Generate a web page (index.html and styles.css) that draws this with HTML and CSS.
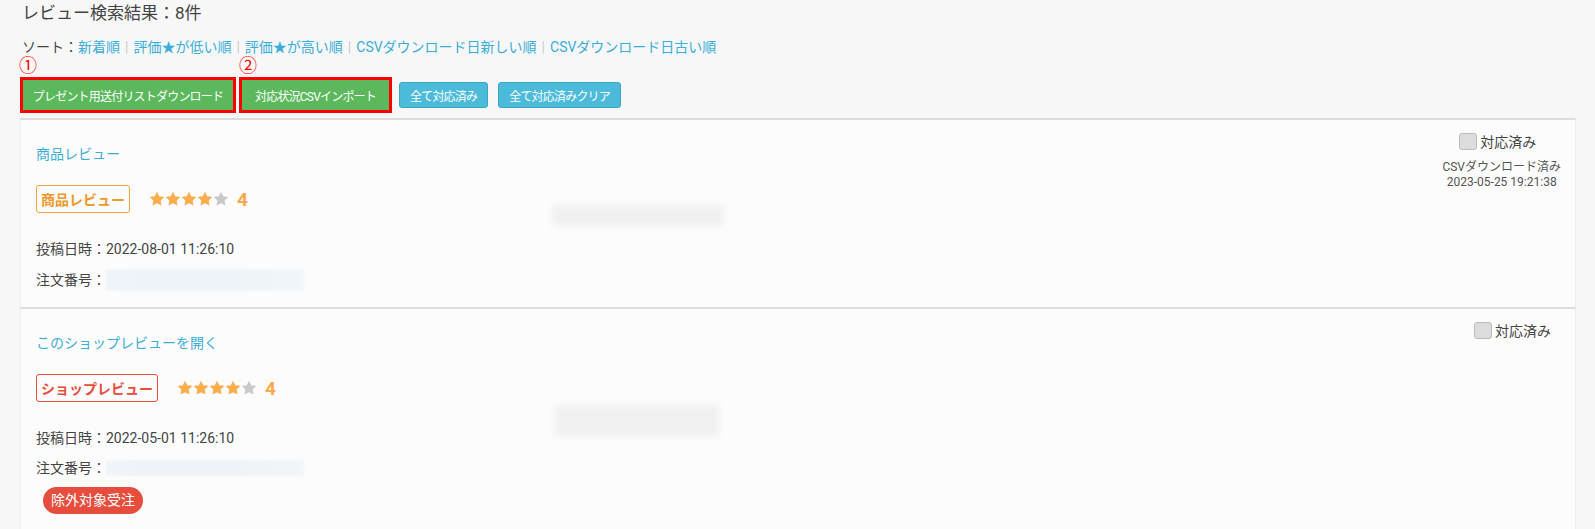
FILE: index.html
```html
<!DOCTYPE html>
<html lang="ja">
<head>
    <meta charset="utf-8">
    <title>レビュー検索結果</title>
    <link rel="stylesheet" href="styles.css">
</head>
<body>
    <h1 class="result-title">レビュー検索結果：8件</h1>

    <div class="sort">
        ソート：<a href="#">新着順</a><span class="sep">|</span><a href="#">評価★が低い順</a><span class="sep">|</span><a href="#">評価★が高い順</a><span class="sep">|</span><a href="#">CSVダウンロード日新しい順</a><span class="sep">|</span><a href="#">CSVダウンロード日古い順</a>
    </div>

    <div class="actions">
        <span class="marked">
            <span class="mark">①</span>
            <button type="button" class="btn btn-green btn-present">プレゼント用送付リストダウンロード</button>
        </span>
        <span class="marked">
            <span class="mark">②</span>
            <button type="button" class="btn btn-green btn-import">対応状況CSVインポート</button>
        </span>
        <button type="button" class="btn btn-blue">全て対応済み</button>
        <button type="button" class="btn btn-blue">全て対応済みクリア</button>
    </div>

    <!-- review 1 -->
    <div class="review-card">
        <div class="review-main">
            <a href="#" class="review-link">商品レビュー</a>
            <div class="review-head">
                <span class="tag tag-item">商品レビュー</span>
                <span class="stars">
                    <svg viewBox="1 1 22 22"><polygon class="on" points="12,2 15.09,8.26 22,9.27 17,14.14 18.18,21.02 12,17.77 5.82,21.02 7,14.14 2,9.27 8.91,8.26"/></svg>
                    <svg viewBox="1 1 22 22"><polygon class="on" points="12,2 15.09,8.26 22,9.27 17,14.14 18.18,21.02 12,17.77 5.82,21.02 7,14.14 2,9.27 8.91,8.26"/></svg>
                    <svg viewBox="1 1 22 22"><polygon class="on" points="12,2 15.09,8.26 22,9.27 17,14.14 18.18,21.02 12,17.77 5.82,21.02 7,14.14 2,9.27 8.91,8.26"/></svg>
                    <svg viewBox="1 1 22 22"><polygon class="on" points="12,2 15.09,8.26 22,9.27 17,14.14 18.18,21.02 12,17.77 5.82,21.02 7,14.14 2,9.27 8.91,8.26"/></svg>
                    <svg viewBox="1 1 22 22"><polygon class="off" points="12,2 15.09,8.26 22,9.27 17,14.14 18.18,21.02 12,17.77 5.82,21.02 7,14.14 2,9.27 8.91,8.26"/></svg>
                </span>
                <span class="score">4</span>
            </div>
            <p class="meta">投稿日時：2022-08-01 11:26:10</p>
            <p class="meta">注文番号：<span class="masked"></span></p>
        </div>
        <div class="review-body">
            <div class="hidden-text"></div>
        </div>
        <div class="review-status">
            <label class="done"><span class="check"></span>対応済み</label>
            <div class="dl-note">CSVダウンロード済み<br>2023-05-25 19:21:38</div>
        </div>
    </div>

    <!-- review 2 -->
    <div class="review-card">
        <div class="review-main">
            <a href="#" class="review-link">このショップレビューを開く</a>
            <div class="review-head">
                <span class="tag tag-shop">ショップレビュー</span>
                <span class="stars">
                    <svg viewBox="1 1 22 22"><polygon class="on" points="12,2 15.09,8.26 22,9.27 17,14.14 18.18,21.02 12,17.77 5.82,21.02 7,14.14 2,9.27 8.91,8.26"/></svg>
                    <svg viewBox="1 1 22 22"><polygon class="on" points="12,2 15.09,8.26 22,9.27 17,14.14 18.18,21.02 12,17.77 5.82,21.02 7,14.14 2,9.27 8.91,8.26"/></svg>
                    <svg viewBox="1 1 22 22"><polygon class="on" points="12,2 15.09,8.26 22,9.27 17,14.14 18.18,21.02 12,17.77 5.82,21.02 7,14.14 2,9.27 8.91,8.26"/></svg>
                    <svg viewBox="1 1 22 22"><polygon class="on" points="12,2 15.09,8.26 22,9.27 17,14.14 18.18,21.02 12,17.77 5.82,21.02 7,14.14 2,9.27 8.91,8.26"/></svg>
                    <svg viewBox="1 1 22 22"><polygon class="off" points="12,2 15.09,8.26 22,9.27 17,14.14 18.18,21.02 12,17.77 5.82,21.02 7,14.14 2,9.27 8.91,8.26"/></svg>
                </span>
                <span class="score">4</span>
            </div>
            <p class="meta">投稿日時：2022-05-01 11:26:10</p>
            <p class="meta">注文番号：<span class="masked masked-thin"></span></p>
            <span class="pill">除外対象受注</span>
        </div>
        <div class="review-body">
            <div class="hidden-text hidden-text-tall"></div>
        </div>
        <div class="review-status">
            <label class="done"><span class="check"></span>対応済み</label>
        </div>
    </div>
</body>
</html>
```

FILE: styles.css
```css
body {
    font-family: Roboto, "Noto Sans CJK JP", sans-serif;
    font-size: 14px;
    color: #444;
    margin: 0;
    padding: 0 19px 0 20px;
    background-color: #f7f7f7;
}

a {
    color: #3aaed8;
    text-decoration: none;
}

.result-title {
    margin: 0;
    padding-left: 2px;
    font-size: 17px;
    font-weight: normal;
    line-height: 27px;
    color: #444;
}

.sort {
    margin-top: 10px;
    padding-left: 2px;
    font-size: 14px;
    line-height: 20px;
    color: #444;
}

.sort .sep {
    color: #ccc;
    margin: 0 5px;
}

/* buttons */
.actions {
    display: flex;
    align-items: center;
    gap: 10px;
    height: 36px;
    margin: 20px 0 5px;
    padding-left: 3px;
}

.marked {
    position: relative;
    display: flex;
}

.mark {
    position: absolute;
    left: -4px;
    top: -24px;
    font-size: 18px;
    line-height: 20px;
    color: #f00;
}

.btn {
    font-family: Roboto, "Noto Sans CJK JP", sans-serif;
    font-size: 12px;
    letter-spacing: -0.8px;
    white-space: nowrap;
    color: #fff;
    border-radius: 3px;
    cursor: pointer;
    padding: 0 10px;
}

.btn-green {
    height: 30px;
    padding: 0 6px;
    background-color: #5cb85c;
    border: none;
    border-radius: 0;
    outline: 3px solid #f00;
}

.btn-present {
    width: 210px;
}

.btn-import {
    width: 147px;
    margin-left: -1px;
}

.btn-blue {
    height: 26px;
    background-color: #4bbbd9;
    border: 1px solid #3aa9c9;
}

/* review cards */
.review-card {
    display: grid;
    grid-template-columns: 516px 1fr auto;
    padding: 11px 14px 16px 15px;
    background-color: #fcfcfc;
    border-top: 2px solid #dcdcdc;
    border-left: 1px solid #eee;
    border-right: 1px solid #eee;
}

.review-main {
    display: flex;
    flex-direction: column;
    align-items: flex-start;
    padding-top: 13px;
}

.review-link {
    line-height: 20px;
}

.review-head {
    display: flex;
    align-items: center;
    margin-top: 21px;
    height: 28px;
}

.tag {
    display: inline-flex;
    align-items: center;
    height: 26px;
    padding: 0 4px;
    font-weight: bold;
    border-radius: 3px;
}

.tag-item {
    color: #ef982a;
    border: 1px solid #f0a23a;
}

.tag-shop {
    color: #e84c3d;
    border: 1px solid #e84c3d;
}

.stars {
    display: flex;
    margin-left: 19px;
}

.stars svg {
    width: 16px;
    height: 16px;
}

.stars .on {
    fill: #fbac4d;
}

.stars .off {
    fill: #c9c9c9;
}

.score {
    margin-left: 8px;
    font-size: 19px;
    font-weight: bold;
    color: #f9a94b;
}

.meta {
    display: flex;
    align-items: center;
    margin: 10px 0 0;
    line-height: 20px;
    color: #444;
}

.review-head + .meta {
    margin-top: 26px;
}

.masked {
    display: inline-block;
    width: 198px;
    height: 22px;
    background: linear-gradient(90deg, #eef4f9, #edf3f8 60%, #f1f6f9);
    filter: blur(1px);
}

.masked-thin {
    height: 16px;
}

.pill {
    margin: 9px 0 0 7px;
    padding: 0 8px;
    height: 27px;
    line-height: 27px;
    color: #fff;
    background-color: #e64d3d;
    border-radius: 14px;
}

.review-body {
    padding-top: 74px;
}

.hidden-text {
    width: 172px;
    height: 21px;
    background-color: #f0f0f0;
    filter: blur(3px);
}

.hidden-text-tall {
    width: 164px;
    height: 31px;
    margin: 11px 0 0 3px;
}

.review-status {
    display: flex;
    flex-direction: column;
    align-items: center;
}

.done {
    display: flex;
    align-items: center;
    margin-right: 8px;
    color: #444;
}

.review-card:last-child .done {
    align-self: flex-end;
    margin-right: 10px;
}

.check {
    width: 16px;
    height: 15px;
    margin-right: 3px;
    background-color: #dcdcdc;
    border: 1px solid #bbb;
    border-radius: 3px;
}

.dl-note {
    margin-top: 9px;
    font-size: 12px;
    line-height: 15px;
    text-align: center;
    color: #555;
}
```
